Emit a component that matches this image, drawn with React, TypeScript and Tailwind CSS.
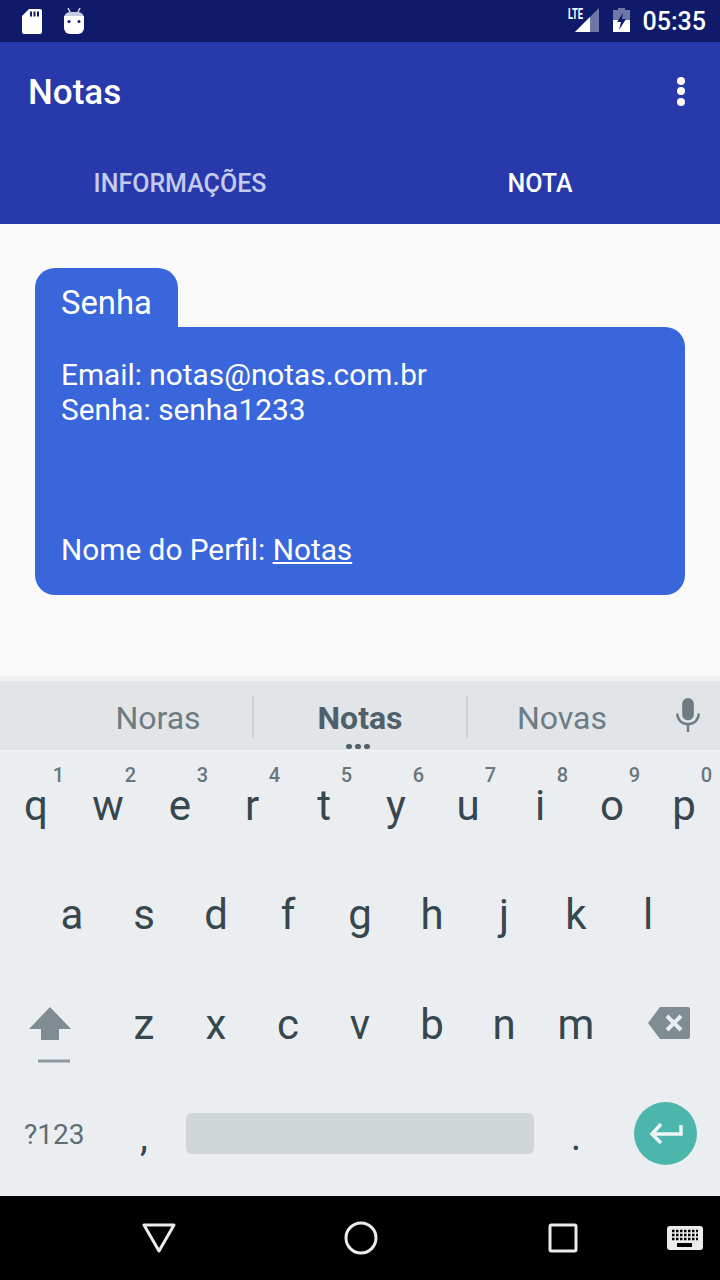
const row1 = [['q', '1'], ['w', '2'], ['e', '3'], ['r', '4'], ['t', '5'], ['y', '6'], ['u', '7'], ['i', '8'], ['o', '9'], ['p', '0']]
const row2 = ['a', 's', 'd', 'f', 'g', 'h', 'j', 'k', 'l']
const row3 = ['z', 'x', 'c', 'v', 'b', 'n', 'm']

function Key({ label, hint }: { label: string; hint?: string }) {
  return (
    <div className="relative w-[72px] h-full flex items-center justify-center text-[42px] leading-none text-[#37474f]">
      {hint && (
        <span className="absolute top-[14px] right-[8px] text-[20px] leading-5 font-medium text-[#68767d]">{hint}</span>
      )}
      <span>{label}</span>
    </div>
  )
}

function StatusBar() {
  return (
    <div className="h-[42px] bg-[#0f1a6b] flex items-center pl-[22px] pr-[14px] text-white">
      {/* sd card */}
      <svg width="20" height="25" viewBox="0 0 20 25" className="mt-[1px]">
        <path d="M7 0h11a2 2 0 0 1 2 2v21a2 2 0 0 1-2 2H2a2 2 0 0 1-2-2V7z" fill="#fff" />
        <path d="M8 2.500h2v5H8zM11.500 2.500h2v5h-2zM15 2.500h2v5h-2z" fill="#0f1a6b" />
      </svg>
      {/* android */}
      <svg width="20" height="26" viewBox="0 0 20 26" className="ml-[22px]">
        <path d="M4 0l2.500 5M16 0l-2.500 5" stroke="#c9cce0" strokeWidth="1.600" fill="none" />
        <path d="M0 10a6 6 0 0 1 6-6h8a6 6 0 0 1 6 6z" fill="#c9cce0" />
        <path d="M0 8h20v12a6 6 0 0 1-6 6H6a6 6 0 0 1-6-6z" fill="#fff" />
        <circle cx="5" cy="13.500" r="1.500" fill="#0f1a6b" />
        <circle cx="15" cy="13.500" r="1.500" fill="#0f1a6b" />
      </svg>
      <div className="flex-1" />
      {/* lte signal */}
      <div className="relative w-[31px] h-[24px] mr-[14px] mb-[2px]">
        <svg width="24" height="24" viewBox="0 0 24 24" className="absolute right-0 top-0">
          <path d="M24 0v24H0z" fill="#6f76a8" />
          <path d="M15 9v15H0z" fill="#fff" />
        </svg>
        <span className="absolute left-0 top-0 text-[15px] leading-[12px] font-bold scale-x-[0.62] origin-left">LTE</span>
      </div>
      {/* battery charging */}
      <svg width="17" height="24" viewBox="0 0 17 24" className="mb-[2px]">
        <path d="M5 0h7v2h5v22H0V2h5z" fill="#6f76a8" />
        <path d="M0 12h17v12H0z" fill="#fff" />
        <path d="M10 5l-6 9h4l-2 8 7-11H9z" fill="#0f1a6b" />
      </svg>
      <span className="ml-[13px] text-[25px] leading-none font-medium">05:35</span>
    </div>
  )
}

function AppBar() {
  return (
    <div className="bg-[#283aab]">
      <div className="h-[100px] flex items-center justify-between pl-[28px] pr-[35px]">
        <span className="text-[35px] leading-none font-medium text-white">Notas</span>
        <div className="flex flex-col gap-[2.500px] mb-[2px]">
          <span className="w-[8px] h-[8px] rounded-full bg-white" />
          <span className="w-[8px] h-[8px] rounded-full bg-white" />
          <span className="w-[8px] h-[8px] rounded-full bg-white" />
        </div>
      </div>
      <div className="h-[82px] flex pt-[2px]">
        <div className="w-1/2 flex items-center justify-center text-[25px] font-medium text-[#c5cbee]">INFORMAÇÕES</div>
        <div className="w-1/2 flex items-center justify-center text-[25px] font-medium text-white">NOTA</div>
      </div>
    </div>
  )
}

function NoteCard() {
  return (
    <div className="h-[452px] bg-[#fafafa] pt-[44px] px-[35px] text-[29.800px] leading-[35px] text-white">
      <div className="w-[143px] h-[59px] bg-[#3a66db] rounded-t-[20px] pl-[26px] pt-[18px] text-[32.800px]">Senha</div>
      <div className="h-[268px] bg-[#3a66db] rounded-b-[20px] rounded-tr-[20px] px-[26px] pt-[30px] flex flex-col">
        <p>Email: notas@notas.com.br</p>
        <p>Senha: senha1233</p>
        <p className="mt-auto mb-[28px]">
          Nome do Perfil: <span className="underline">Notas</span>
        </p>
      </div>
    </div>
  )
}

function Suggestions() {
  return (
    <div className="h-[74px] bg-[#e1e5e8] border-t-[5px] border-[#f0f1f2] flex items-center relative pt-[3px]">
      <div className="w-[65px]" />
      <div className="w-[187px] text-center text-[32px] text-[#6d7b83] pr-[1px] pt-[1px]">Noras</div>
      <div className="w-[2px] h-[42px] bg-[#ccd1d4]" />
      <div className="w-[212px] text-center text-[32px] font-bold text-[#50606a] pt-[1px]">Notas</div>
      <div className="w-[2px] h-[42px] bg-[#ccd1d4]" />
      <div className="w-[188px] text-center text-[32px] text-[#6d7b83] pt-[1px]">Novas</div>
      <svg width="28" height="35" viewBox="0 0 28 36" className="ml-[18px] mb-[3px]" fill="none">
        <rect x="8" y="0" width="12" height="23" rx="6" fill="#6d7b83" />
        <path d="M3 16c0 7 5 11 11 11s11-4 11-11M14 27v8" stroke="#6d7b83" strokeWidth="2.500" />
      </svg>
      <div className="absolute left-[346px] bottom-[1px] flex gap-[3px]">
        <span className="w-[6px] h-[5px] rounded-full bg-[#50606a]" />
        <span className="w-[6px] h-[5px] rounded-full bg-[#50606a]" />
        <span className="w-[6px] h-[5px] rounded-full bg-[#50606a]" />
      </div>
    </div>
  )
}

function Keyboard() {
  return (
    <div className="bg-[#eaeef1]">
      <Suggestions />
      <div className="h-[110px] flex border-t border-[#f2f4f6]">
        {row1.map(([k, h]) => <Key key={k} label={k} hint={h} />)}
      </div>
      <div className="h-[110px] flex pl-[36px]">
        {row2.map(k => <Key key={k} label={k} />)}
      </div>
      <div className="h-[110px] flex">
        <div className="w-[108px] pl-[29px] flex items-center">
          <svg width="42" height="56" viewBox="0 0 42 56" className="mt-[20px]">
            <path d="M21 0l21 22H30v11H12V22H0z" fill="#7f8c92" />
            <path d="M9 54h32" stroke="#8e999f" strokeWidth="3" />
          </svg>
        </div>
        {row3.map(k => <Key key={k} label={k} />)}
        <div className="flex-1 pl-[36px] flex items-center">
          <svg width="42" height="32" viewBox="0 0 42 32" className="mb-[4px]">
            <path d="M12 0h28a2 2 0 0 1 2 2v28a2 2 0 0 1-2 2H12L0 16z" fill="#7f8c92" />
            <path d="M19 9l14 14M33 9L19 23" stroke="#eaeef1" strokeWidth="4" />
          </svg>
        </div>
      </div>
      <div className="h-[116px] flex items-center">
        <div className="w-[108px] pl-[24px] text-[28px] text-[#5f6d75] mb-[6px]">?123</div>
        <div className="w-[72px] text-center text-[40px] text-[#37474f] leading-none mb-[2px]">,</div>
        <div className="w-[348px] h-[41px] ml-[6px] rounded-[6px] bg-[#d0d5d8] mb-[9px]" />
        <div className="w-[84px] text-center text-[40px] text-[#37474f] leading-none mb-[2px]">.</div>
        <div className="w-[63px] h-[63px] ml-[16px] mb-[9px] rounded-full bg-[#4db6ac] flex items-center justify-center">
          <svg width="34" height="22" viewBox="0 0 34 22" fill="none" stroke="#eef6f5" strokeWidth="3.500">
            <path d="M32 2v9H4M12 1l-9 10 9 9" />
          </svg>
        </div>
      </div>
    </div>
  )
}

function NavBar() {
  return (
    <div className="h-[84px] bg-black flex items-center">
      <svg width="34" height="30" viewBox="0 0 34 30" className="ml-[142px]" fill="none" stroke="#ececec" strokeWidth="3" strokeLinejoin="round">
        <path d="M2 2h30L17 28z" />
      </svg>
      <svg width="34" height="34" viewBox="0 0 34 34" className="ml-[168px]" fill="none" stroke="#ececec" strokeWidth="3">
        <circle cx="17" cy="17" r="15" />
      </svg>
      <svg width="30" height="30" viewBox="0 0 30 30" className="ml-[170px]" fill="none" stroke="#ececec" strokeWidth="3">
        <rect x="2" y="2" width="26" height="26" rx="1.500" />
      </svg>
      <svg width="36" height="24" viewBox="0 0 36 24" className="ml-[89px]">
        <rect width="36" height="24" rx="3" fill="#ececec" />
        <path d="M5 5h26M5 9h26M5 13h26" stroke="#000" strokeWidth="2.500" strokeDasharray="2.500 1.500" />
        <rect x="10" y="17" width="15" height="4" fill="#000" />
      </svg>
    </div>
  )
}

export default function App() {
  return (
    <div className="w-[720px] h-[1280px] overflow-hidden font-['Roboto',sans-serif]">
      <StatusBar />
      <AppBar />
      <NoteCard />
      <Keyboard />
      <NavBar />
    </div>
  )
}
